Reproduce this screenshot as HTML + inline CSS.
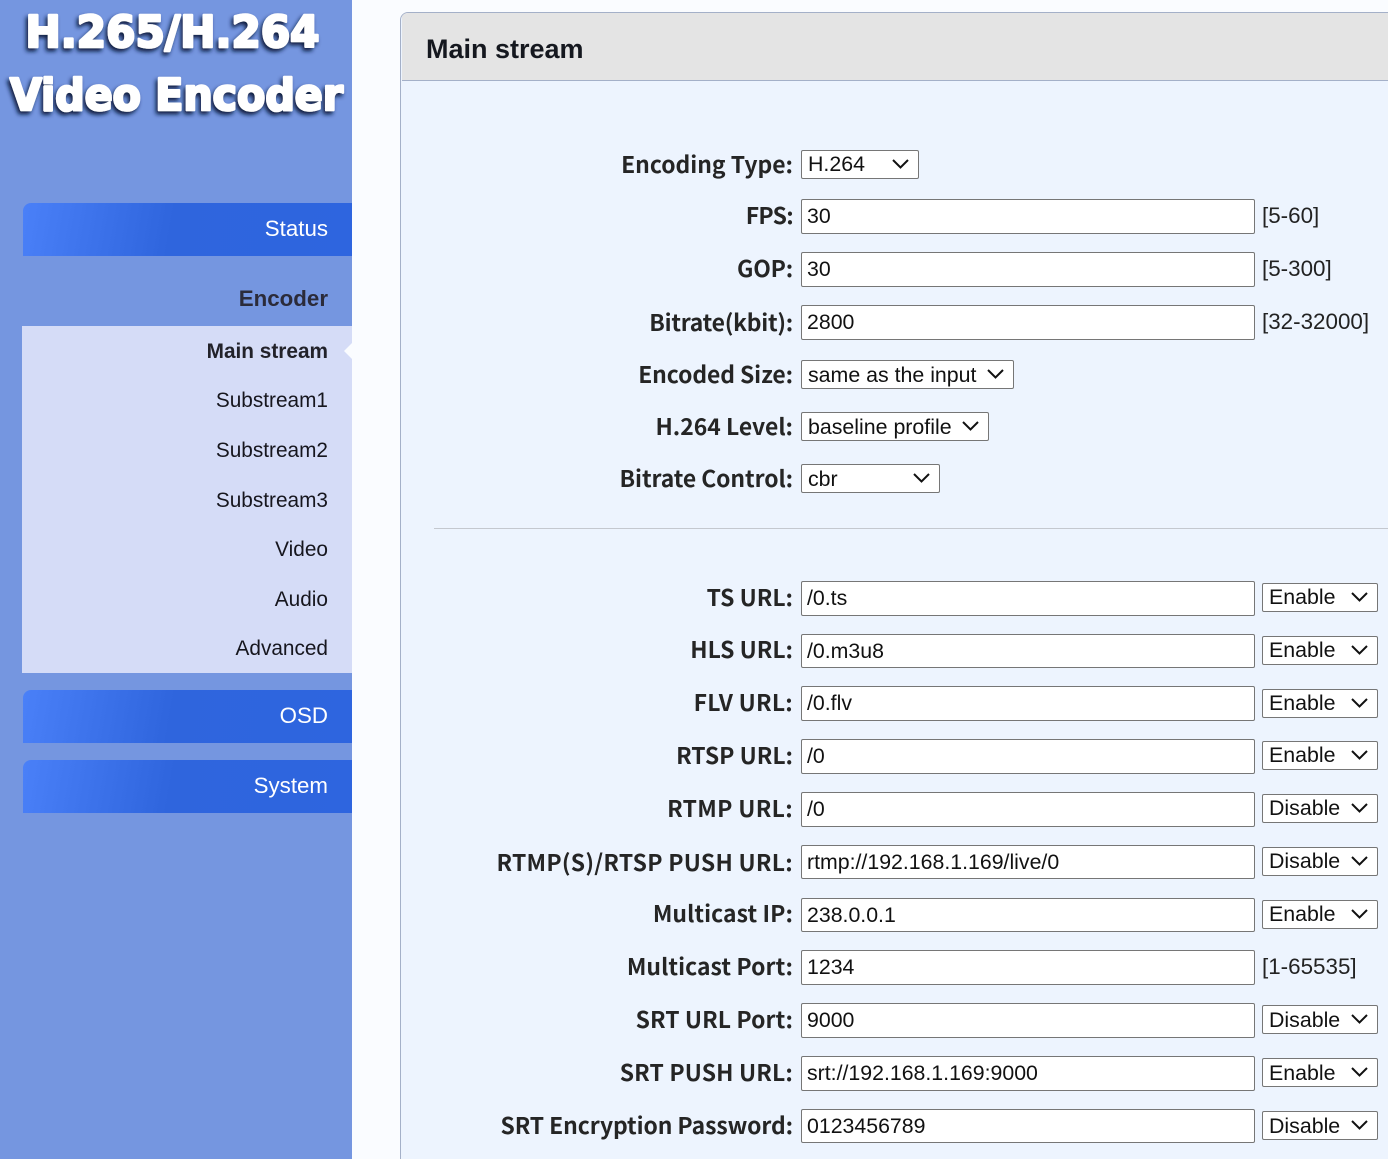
<!DOCTYPE html>
<html><head><meta charset="utf-8"><title>Main stream</title>
<style>
html,body{margin:0;padding:0;width:1388px;height:1159px;overflow:hidden;background:#fafcff}
body{position:relative;font-family:"Liberation Sans",sans-serif}
div,svg{position:absolute;box-sizing:border-box}
.side{left:0;top:0;width:352px;height:1159px;background:#7596e0}
.btn{left:23px;width:329px;height:53px;border-top-left-radius:8px;background:linear-gradient(100deg,#4a80f8 0,#2f65dd 45%,#2e65df 100%);color:#fff;font-size:22.3px;line-height:51px;text-align:right;padding-right:24px}
.sub{right:1060px;font-size:20.8px;line-height:30px;height:30px;color:#16161e;white-space:nowrap}
.lb{right:595px;height:30px;line-height:30px;margin-top:-1px;font-family:"Noto Sans CJK JP","Liberation Sans",sans-serif;font-weight:700;font-size:22.9px;color:#252525;white-space:nowrap}
.in{left:801px;width:454px;height:35px;background:#fff;border:1px solid #767676;border-radius:2px;font-size:21.3px;line-height:33px;padding-left:5px;color:#111;white-space:nowrap}
.s{height:34px}
.se{height:29px;background:#fff;border:1px solid #767676;border-radius:2px;font-size:21.35px;line-height:28px;padding-left:6px;color:#111;white-space:nowrap}
.u{line-height:26px}
.se svg{right:8px;top:7px;width:19px;height:11px}
.r{left:1262px;width:116px}
.hint{left:1262px;height:30px;line-height:30px;font-size:22.4px;color:#222;white-space:nowrap}
</style></head><body>
<div class="side"></div>
<svg style="left:0;top:0" width="352" height="130">
<defs><filter id="sh" x="-10%" y="-30%" width="120%" height="160%"><feDropShadow dx="-2" dy="3" stdDeviation="2" flood-color="#0c1a40" flood-opacity="1"/></filter></defs>
<g filter="url(#sh)" fill="#fff" stroke="#fff" stroke-width="2.6" stroke-linejoin="round" font-family="'DejaVu Sans',sans-serif" font-weight="700" font-size="44">
<text x="25.5" y="47" textLength="294" lengthAdjust="spacingAndGlyphs">H.265/H.264</text>
<text x="10" y="110" textLength="333" lengthAdjust="spacingAndGlyphs">Video Encoder</text>
</g></svg>

<div class="btn" style="top:203px">Status</div>
<div style="left:22px;top:284px;width:306px;height:30px;line-height:30px;text-align:right;font-size:22.3px;font-weight:700;color:#2b2b3a">Encoder</div>
<div style="left:22px;top:326px;width:330px;height:347px;background:#d5dcf7"></div>
<div style="left:344px;top:343px;width:0;height:0;border-top:8px solid transparent;border-bottom:8px solid transparent;border-right:8px solid #fafcff"></div>
<div class="sub" style="top:337px;font-weight:700;color:#22222a">Main stream</div>
<div class="sub" style="top:386px">Substream1</div>
<div class="sub" style="top:436px">Substream2</div>
<div class="sub" style="top:486px">Substream3</div>
<div class="sub" style="top:535px">Video</div>
<div class="sub" style="top:585px">Audio</div>
<div class="sub" style="top:634px">Advanced</div>
<div class="btn" style="top:690px">OSD</div>
<div class="btn" style="top:760px">System</div>

<div style="left:400px;top:12px;width:1000px;height:1160px;background:#edf4fe;border:1px solid #a4b0c8;border-radius:8px 0 0 0;overflow:hidden">
  <div style="left:1px;top:0;width:1000px;height:68px;background:#e4e4e4;border-bottom:1px solid #a4b0c8"></div>
</div>
<div style="left:426px;top:30px;height:38px;line-height:38px;font-size:27px;font-weight:700;color:#15181f;white-space:nowrap">Main stream</div>
<div style="left:434px;top:528px;width:954px;height:1px;background:#c4c8cf"></div>

<div class="lb" style="top:149px">Encoding Type:</div>
<div class="se u" style="left:801px;top:150px;width:118px">H.264<svg viewBox="0 0 19 11"><path d="M2 2l7.5 7.5L17 2" fill="none" stroke="#111" stroke-width="2"/></svg></div>
<div class="lb" style="top:200px;letter-spacing:-.7px">FPS:</div><div class="in" style="top:199px">30</div><div class="hint" style="top:201px">[5-60]</div>
<div class="lb" style="top:253px;letter-spacing:-.2px">GOP:</div><div class="in" style="top:252px">30</div><div class="hint" style="top:254px">[5-300]</div>
<div class="lb" style="top:307px;letter-spacing:-.23px">Bitrate(kbit):</div><div class="in" style="top:305px">2800</div><div class="hint" style="top:307px">[32-32000]</div>
<div class="lb" style="top:359px;letter-spacing:-.08px">Encoded Size:</div>
<div class="se" style="left:801px;top:360px;width:213px">same as the input<svg viewBox="0 0 19 11"><path d="M2 2l7.5 7.5L17 2" fill="none" stroke="#111" stroke-width="2"/></svg></div>
<div class="lb" style="top:411px">H.264 Level:</div>
<div class="se" style="left:801px;top:412px;width:188px">baseline profile<svg viewBox="0 0 19 11"><path d="M2 2l7.5 7.5L17 2" fill="none" stroke="#111" stroke-width="2"/></svg></div>
<div class="lb" style="top:463px;letter-spacing:-.07px">Bitrate Control:</div>
<div class="se" style="left:801px;top:464px;width:139px">cbr<svg viewBox="0 0 19 11"><path d="M2 2l7.5 7.5L17 2" fill="none" stroke="#111" stroke-width="2"/></svg></div>

<div class="lb" style="top:582px">TS URL:</div><div class="in" style="top:581px">/0.ts</div>
<div class="se r u" style="top:583px">Enable<svg viewBox="0 0 19 11"><path d="M2 2l7.5 7.5L17 2" fill="none" stroke="#111" stroke-width="2"/></svg></div>
<div class="lb" style="top:634px">HLS URL:</div><div class="in s" style="top:634px;line-height:32px">/0.m3u8</div>
<div class="se r u" style="top:636px">Enable<svg viewBox="0 0 19 11"><path d="M2 2l7.5 7.5L17 2" fill="none" stroke="#111" stroke-width="2"/></svg></div>
<div class="lb" style="top:687px;letter-spacing:.25px">FLV URL:</div><div class="in" style="top:686px">/0.flv</div>
<div class="se r u" style="top:689px">Enable<svg viewBox="0 0 19 11"><path d="M2 2l7.5 7.5L17 2" fill="none" stroke="#111" stroke-width="2"/></svg></div>
<div class="lb" style="top:740px">RTSP URL:</div><div class="in" style="top:739px">/0</div>
<div class="se r u" style="top:741px">Enable<svg viewBox="0 0 19 11"><path d="M2 2l7.5 7.5L17 2" fill="none" stroke="#111" stroke-width="2"/></svg></div>
<div class="lb" style="top:793px;letter-spacing:.33px">RTMP URL:</div><div class="in" style="top:792px">/0</div>
<div class="se r u" style="top:794px">Disable<svg viewBox="0 0 19 11"><path d="M2 2l7.5 7.5L17 2" fill="none" stroke="#111" stroke-width="2"/></svg></div>
<div class="lb" style="top:847px;letter-spacing:.27px">RTMP(S)/RTSP PUSH URL:</div><div class="in s" style="top:845px">rtmp://192.168.1.169/live/0</div>
<div class="se r u" style="top:847px">Disable<svg viewBox="0 0 19 11"><path d="M2 2l7.5 7.5L17 2" fill="none" stroke="#111" stroke-width="2"/></svg></div>
<div class="lb" style="top:898px;letter-spacing:.08px">Multicast IP:</div><div class="in s" style="top:898px">238.0.0.1</div>
<div class="se r u" style="top:900px">Enable<svg viewBox="0 0 19 11"><path d="M2 2l7.5 7.5L17 2" fill="none" stroke="#111" stroke-width="2"/></svg></div>
<div class="lb" style="top:951px;letter-spacing:.07px">Multicast Port:</div><div class="in" style="top:950px">1234</div><div class="hint" style="top:952px">[1-65535]</div>
<div class="lb" style="top:1004px;letter-spacing:.08px">SRT URL Port:</div><div class="in" style="top:1003px">9000</div>
<div class="se r" style="top:1005px">Disable<svg viewBox="0 0 19 11"><path d="M2 2l7.5 7.5L17 2" fill="none" stroke="#111" stroke-width="2"/></svg></div>
<div class="lb" style="top:1057px;letter-spacing:.15px">SRT PUSH URL:</div><div class="in" style="top:1056px">srt://192.168.1.169:9000</div>
<div class="se r" style="top:1058px">Enable<svg viewBox="0 0 19 11"><path d="M2 2l7.5 7.5L17 2" fill="none" stroke="#111" stroke-width="2"/></svg></div>
<div class="lb" style="top:1110px;letter-spacing:-.08px">SRT Encryption Password:</div><div class="in s" style="top:1109px">0123456789</div>
<div class="se r" style="top:1111px">Disable<svg viewBox="0 0 19 11"><path d="M2 2l7.5 7.5L17 2" fill="none" stroke="#111" stroke-width="2"/></svg></div>
</body></html>
